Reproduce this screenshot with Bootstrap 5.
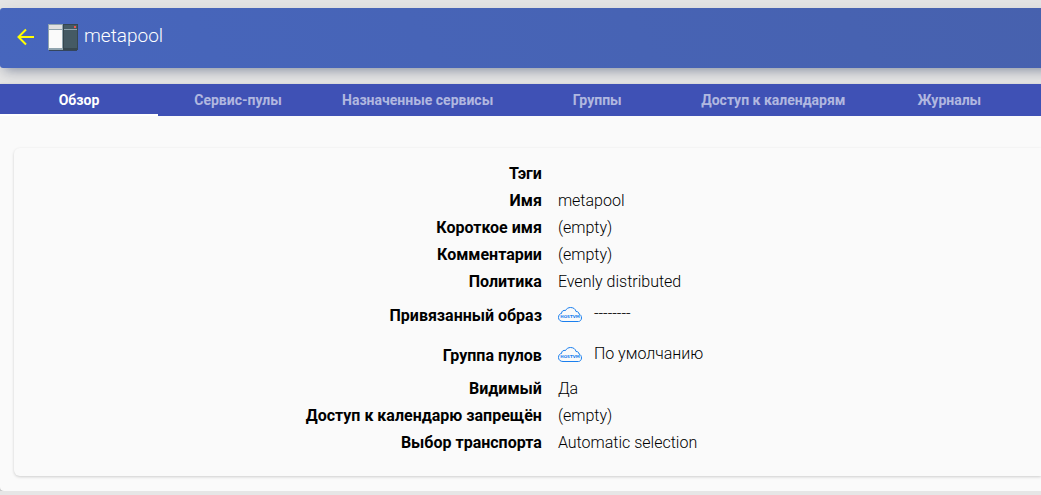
<!DOCTYPE html>
<html lang="ru">
<head>
<meta charset="utf-8">
<meta name="viewport" content="width=device-width, initial-scale=1">
<title>metapool</title>
<link href="https://cdn.jsdelivr.net/npm/bootstrap@5.3.0/dist/css/bootstrap.min.css" rel="stylesheet">
<style>
  body { background: #e6e6e6; font-family: Roboto, "Noto Sans", sans-serif; color: #000; overflow-x: hidden; }
  .page-head { height: 60px; margin-right: -16px; padding: 0 0 4px 16px; border-radius: 3px; color: #fff;
    background: linear-gradient(60deg, #4766bd, #4761ae);
    box-shadow: 0 4px 20px rgba(0,0,0,.1), 0 7px 10px -5px rgba(40,60,110,.4); }
  .page-title { font-size: 19px; line-height: 24px; font-weight: 300; }
  .server-icon { margin-left: 8px; }
  .panel { background: #fafafa; border-radius: 0 0 0 4px; box-shadow: 0 1px 3px rgba(0,0,0,.3); padding-bottom: 15px; }
  .tab-strip { background: #3f51b5; height: 32px; }
  .tab-strip .nav-link { flex: none; min-width: 160px; height: 32px; padding: 0 24px; font-size: 14px; line-height: 32px; font-weight: 700;
    color: rgba(255,255,255,.6); border-radius: 0; white-space: nowrap; }
  .tab-strip .nav-link.active { min-width: 158px; color: #fff; box-shadow: inset 0 -2px #fff; }
  .details { margin: 32px 0 0 14px; padding: 12px 0 20px; border-radius: 6px 0 0 6px; font-size: 16px; line-height: 27px;
    box-shadow: 0 1px 3px rgba(0,0,0,.18); }
  .details dt { width: 51.4%; font-weight: 700; }
  .details dd { font-weight: 300; }
  .pic-row { height: 40px; line-height: 42px; }
  .pic-row dd { line-height: 38px; }
</style>
</head>
<body>
<header class="page-head d-flex align-items-center mt-2">
  <a href="#" aria-label="Назад" class="d-flex">
    <svg width="20" height="20" viewBox="0 0 20 20" fill="none" stroke="#ff0" stroke-width="2"><path d="M18 11H3M10 3.500 2.500 11 10 18.500"/></svg>
  </a>
  <svg class="server-icon me-1" width="36" height="32" viewBox="0 0 36 32" aria-hidden="true">
    <path d="M5 28h28v3H5z" fill="#34455c"/>
    <path d="M4 4h15v26H4z" fill="#90a4ae"/><path d="M5 5h13v4H5z" fill="#e0e0e0"/><path d="M5 10h13v18H5z" fill="#fafafa"/>
    <path d="M19 4h15v26H19z" fill="#37474f"/><path d="M20 5h13v23H20z" fill="#455a64"/>
    <path d="M20 9h13v1H20z" fill="#90a4ae"/><path d="M30 6h2v2h-2z" fill="#ef5350"/>
  </svg>
  <h1 class="page-title mb-0">metapool</h1>
</header>
<main class="panel mt-3">
  <div class="nav tab-strip flex-nowrap overflow-hidden" role="tablist">
    <button type="button" class="nav-link bg-transparent border-0 active" role="tab" aria-selected="true">Обзор</button>
    <button type="button" class="nav-link bg-transparent border-0" role="tab">Сервис-пулы</button>
    <button type="button" class="nav-link bg-transparent border-0" role="tab">Назначенные сервисы</button>
    <button type="button" class="nav-link bg-transparent border-0" role="tab">Группы</button>
    <button type="button" class="nav-link bg-transparent border-0" role="tab">Доступ к календарям</button>
    <button type="button" class="nav-link bg-transparent border-0" role="tab">Журналы</button>
  </div>
  <svg width="0" height="0" class="d-none" aria-hidden="true">
    <symbol id="cloud" viewBox="0 0 24 16">
      <path d="M5 14.500C2.500 14.500.5 13 .5 10.500S2 6.500 3.500 6.500C3.500 4 5.500 3 7.500 3.500 8.500 1.500 10.500.5 12.500.5c3 0 5 1.500 5.500 4 2 0 3 1 3 2.500 1.500.5 2.500 2 2.500 4 0 2-1.500 3.500-3 3.500z" fill="none" stroke="#1a7fee"/>
      <text x="12" y="11" text-anchor="middle" font-size="4" font-weight="700" font-family="DejaVu Sans, sans-serif" fill="#1a7fee">HOSTVM</text>
    </symbol>
  </svg>
  <dl class="details">
    <div class="d-flex"><dt class="text-end">Тэги</dt><dd class="ms-3 mb-0"></dd></div>
    <div class="d-flex"><dt class="text-end">Имя</dt><dd class="ms-3 mb-0">metapool</dd></div>
    <div class="d-flex"><dt class="text-end">Короткое имя</dt><dd class="ms-3 mb-0">(empty)</dd></div>
    <div class="d-flex"><dt class="text-end">Комментарии</dt><dd class="ms-3 mb-0">(empty)</dd></div>
    <div class="d-flex"><dt class="text-end">Политика</dt><dd class="ms-3 mb-0">Evenly distributed</dd></div>
    <div class="d-flex pic-row"><dt class="text-end">Привязанный образ</dt><dd class="ms-3 mb-0 d-flex"><svg class="align-self-center me-2" width="24" height="16"><use href="#cloud"/></svg><span class="ps-1">--------</span></dd></div>
    <div class="d-flex pic-row"><dt class="text-end">Группа пулов</dt><dd class="ms-3 mb-0 d-flex"><svg class="align-self-center me-2" width="24" height="16"><use href="#cloud"/></svg><span class="ps-1">По умолчанию</span></dd></div>
    <div class="d-flex"><dt class="text-end">Видимый</dt><dd class="ms-3 mb-0">Да</dd></div>
    <div class="d-flex"><dt class="text-end">Доступ к календарю запрещён</dt><dd class="ms-3 mb-0">(empty)</dd></div>
    <div class="d-flex"><dt class="text-end">Выбор транспорта</dt><dd class="ms-3 mb-0">Automatic selection</dd></div>
  </dl>
</main>
<script src="https://cdn.jsdelivr.net/npm/bootstrap@5.3.0/dist/js/bootstrap.bundle.min.js"></script>
</body>
</html>
